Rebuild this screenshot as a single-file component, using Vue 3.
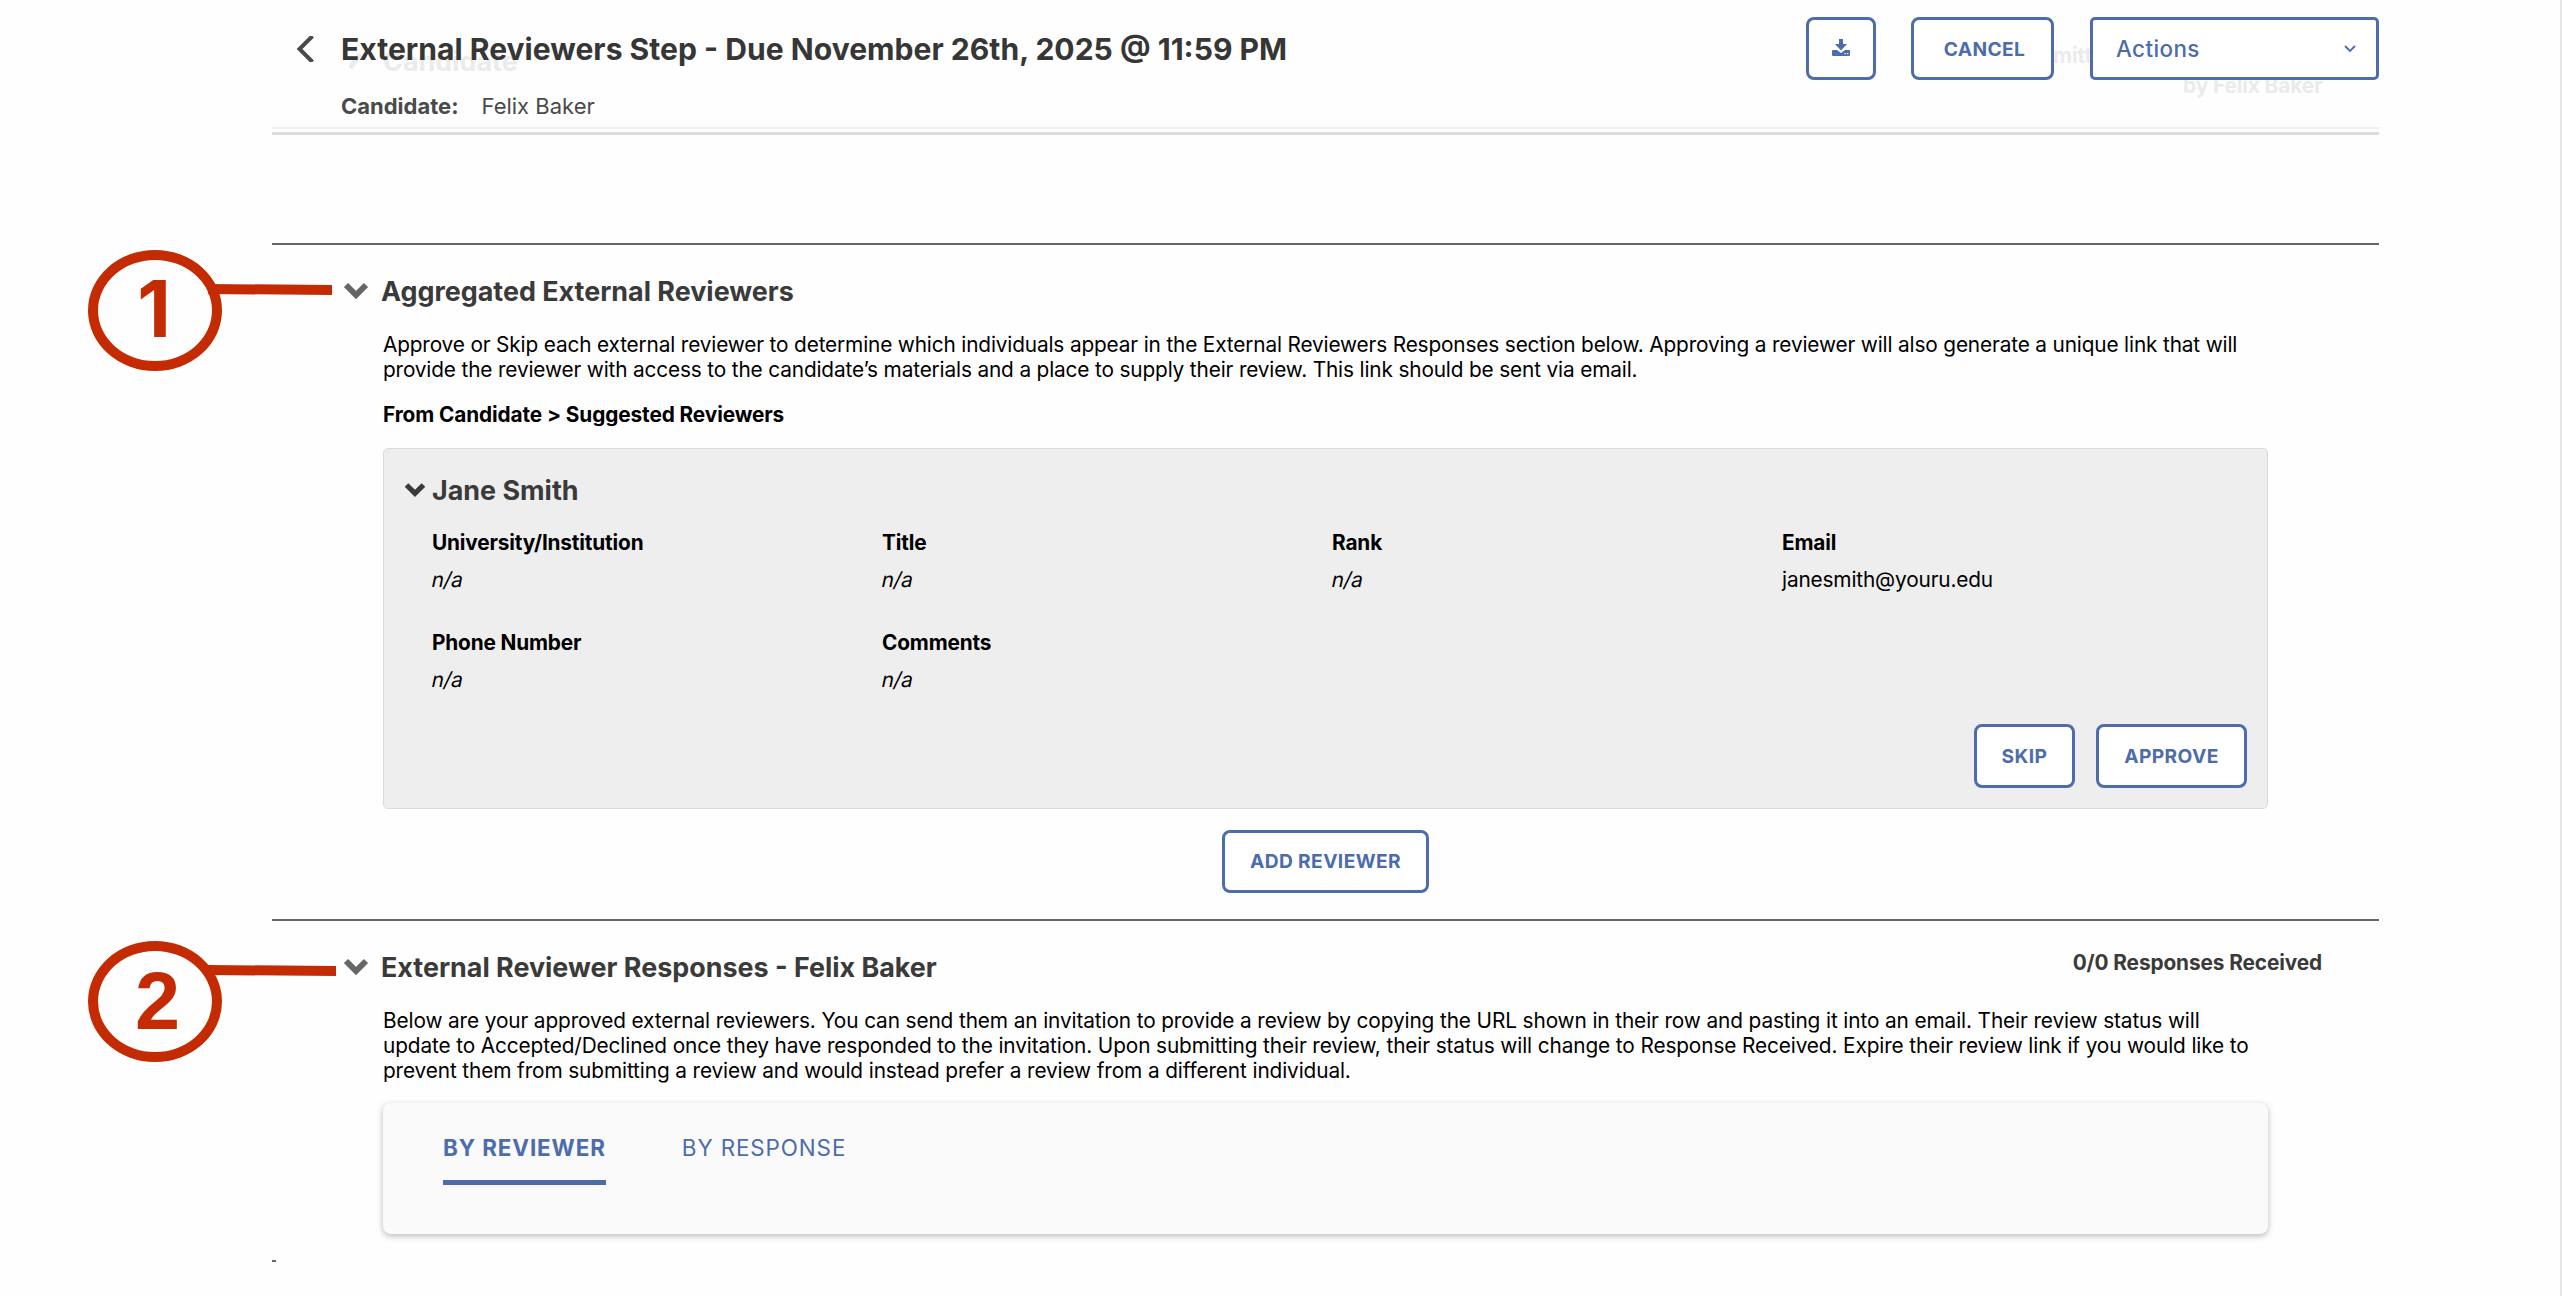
<script setup>
import { ref } from 'vue'

const candidato = ref('Felix Baker')

const fields = ref([
  { label: 'University/Institution', value: '' },
  { label: 'Title', value: '' },
  { label: 'Rank', value: '' },
  { label: 'Email', value: 'janesmith@youru.edu' },
  { label: 'Phone Number', value: '' },
  { label: 'Comments', value: '' }
])

const open = ref({ aggregated: true, reviewer: true, responses: true })
const tab = ref('reviewer')

function toggle(name) {
  open.value[name] = !open.value[name]
}
</script>

<template>
  <div class="page">
    <header class="header">
      <div class="ghost ghost-title">
        <svg width="14" height="20" viewBox="0 0 14 20"><path d="M1 17 L11 3" stroke="#ebebeb" stroke-width="5" /></svg>
        <span>Candidate</span>
      </div>
      <span class="ghost ghost-mitt">mitted</span>
      <span class="ghost ghost-by">by {{ candidato }}</span>

      <div class="heading">
        <svg class="back" width="20" height="26" viewBox="0 0 20 26">
          <path d="M16.500 0 L3.500 13 L16.500 26" fill="none" stroke="#4a4a4a" stroke-width="4" />
        </svg>
        <div>
          <h1>External Reviewers Step - Due November 26th, 2025 @ 11:59 PM</h1>
          <p class="candidate"><b>Candidate:</b><span>{{ candidato }}</span></p>
        </div>
      </div>
      <div class="header-actions">
        <button class="btn download">
          <svg width="18" height="17" viewBox="0 0 18 17">
            <path d="M7 0h4v5h4l-6 6.500l-6-6.500h4z" fill="#4c6cac" />
            <path d="M1 11h4l4 3l4-3h4a1 1 0 0 1 1 1v4a1 1 0 0 1-1 1h-16a1 1 0 0 1-1-1v-4a1 1 0 0 1 1-1z" fill="#4c6cac" />
            <path d="M12.500 14h1.300v1.200h-1.300zM15 14h1.300v1.200h-1.300z" fill="#fff" />
          </svg>
        </button>
        <button class="btn cancel">CANCEL</button>
        <button class="btn select">
          <span>Actions</span>
          <svg width="12" height="8" viewBox="0 0 12 8"><path d="M1 1 L6 6 L11 1" fill="none" stroke="#4c6cac" stroke-width="1.800" /></svg>
        </button>
      </div>
    </header>

    <section class="section first">
      <div class="marker">
        <span class="circle">1</span>
        <svg class="pointer" width="124" height="14" viewBox="0 0 124 14"><path d="M0 1 L124 2 L124 12 L0 11 Z" fill="#c42b03" /></svg>
      </div>
      <div class="section-head">
        <svg class="chevron" width="26" height="18" viewBox="0 0 26 18" @click="toggle('aggregated')">
          <path d="M3 3 L13 13 L23 3" fill="none" stroke="#666" stroke-width="6" />
        </svg>
        <h2>Aggregated External Reviewers</h2>
      </div>
      <div v-if="open.aggregated" class="section-body">
        <p class="text">Approve or Skip each external reviewer to determine which individuals appear in the External Reviewers Responses section below. Approving a reviewer will also generate a unique link that will<br>provide the reviewer with access to the candidate’s materials and a place to supply their review. This link should be sent via email.</p>
        <p class="from">From Candidate &gt; Suggested Reviewers</p>
        <div class="reviewer">
          <div class="reviewer-name">
            <svg width="22" height="16" viewBox="0 0 26 18" @click="toggle('reviewer')">
              <path d="M3 3 L13 13 L23 3" fill="none" stroke="#3a3a3a" stroke-width="6" />
            </svg>
            <h2>Jane Smith</h2>
          </div>
          <div v-if="open.reviewer" class="fields">
            <div v-for="item in fields" :key="item.label" class="field">
              <p class="label">{{ item.label }}</p>
              <p v-if="item.value">{{ item.value }}</p>
              <p v-else class="empty">n/a</p>
            </div>
          </div>
          <div class="reviewer-actions">
            <button class="btn skip">SKIP</button>
            <button class="btn approve">APPROVE</button>
          </div>
        </div>
        <div class="add">
          <button class="btn add-btn">ADD REVIEWER</button>
        </div>
      </div>
    </section>

    <section class="section second">
      <div class="marker">
        <span class="circle">2</span>
        <svg class="pointer" width="128" height="14" viewBox="0 0 128 14"><path d="M0 1 L128 2 L128 12 L0 11 Z" fill="#c42b03" /></svg>
      </div>
      <div class="section-head">
        <svg class="chevron" width="26" height="18" viewBox="0 0 26 18" @click="toggle('responses')">
          <path d="M3 3 L13 13 L23 3" fill="none" stroke="#666" stroke-width="6" />
        </svg>
        <h2>External Reviewer Responses - {{ candidato }}</h2>
        <span class="received">0/0 Responses Received</span>
      </div>
      <div v-if="open.responses" class="section-body">
        <p class="text">Below are your approved external reviewers. You can send them an invitation to provide a review by copying the URL shown in their row and pasting it into an email. Their review status will<br>update to Accepted/Declined once they have responded to the invitation. Upon submitting their review, their status will change to Response Received. Expire their review link if you would like to<br>prevent them from submitting a review and would instead prefer a review from a different individual.</p>
        <div class="tabs">
          <button class="tab" :class="{ active: tab === 'reviewer' }" @click="tab = 'reviewer'">BY REVIEWER</button>
          <button class="tab" :class="{ active: tab === 'response' }" @click="tab = 'response'">BY RESPONSE</button>
        </div>
      </div>
    </section>
    <div class="stub"></div>
  </div>
</template>

<style>
body {
  background: #fefefe;
}
</style>

<style scoped>
.page {
  box-sizing: border-box;
  width: 2562px;
  height: 1296px;
  overflow: hidden;
  padding: 0 181px 0 272px;
  border-right: 2px solid #e6e6e6;
  font-family: Inter, "Liberation Sans", sans-serif;
  font-size: 20.8px;
  font-optical-sizing: none;
  color: #000;
}

h1,
h2,
p {
  margin: 0;
}

h1 {
  font-size: 30.1px;
  line-height: 36px;
  font-weight: 700;
  color: #363636;
  white-space: nowrap;
}

h2 {
  font-size: 26.9px;
  line-height: 32px;
  font-weight: 700;
  color: #3a3a3a;
}

.header {
  position: relative;
  box-sizing: border-box;
  height: 135px;
  border-bottom: 3px solid #dcdcdc;
  display: flex;
  justify-content: space-between;
  align-items: flex-start;
}

/* second hairline just over the header border */
.header::after {
  content: "";
  position: absolute;
  left: 0;
  right: 0;
  bottom: 3px;
  height: 2px;
  background: #f0f0f0;
}

.heading {
  position: relative;
  display: flex;
  padding: 31px 0 0 24px;
}

.back {
  margin: 5px 25px 0 0;
}

.candidate {
  display: flex;
  gap: 23px;
  margin-top: 25px;
  font-size: 22px;
  line-height: 28px;
  color: #4a4a4a;
}

.header-actions {
  position: relative;
  display: flex;
  padding-top: 17px;
}

.ghost {
  position: absolute;
  font-weight: 700;
  color: #ebebeb;
  white-space: nowrap;
}

.ghost-title {
  left: 77px;
  top: 45px;
  display: flex;
  align-items: center;
  gap: 20px;
  font-size: 26.9px;
  line-height: 32px;
}

.ghost-mitt {
  left: 1781px;
  top: 42px;
  line-height: 28px;
}

.ghost-by {
  left: 1911px;
  top: 72px;
  line-height: 28px;
  letter-spacing: -0.1px;
}

.btn {
  box-sizing: border-box;
  height: 63px;
  padding: 0;
  border: 3px solid #4c6cac;
  border-radius: 8px;
  background: #fff;
  color: #4c6cac;
  font-family: inherit;
  font-size: 19.2px;
  font-weight: 700;
  letter-spacing: 0.4px;
}

.download {
  width: 70px;
  margin-right: 35px;
}

.cancel {
  width: 143px;
  margin-right: 36px;
  padding-left: 4px;
}

.select {
  width: 289px;
  border-radius: 5px;
  padding: 0 20px 0 23px;
  display: flex;
  align-items: center;
  justify-content: space-between;
  font-size: 22.4px;
  font-weight: 500;
}

.section {
  position: relative;
  border-top: 2px solid #666;
}

.first {
  margin-top: 108px;
}

.marker {
  position: absolute;
  left: -184px;
}

.first .marker {
  top: 5px;
}

.second .marker {
  top: 20px;
}

.circle {
  box-sizing: border-box;
  display: block;
  width: 134px;
  height: 121px;
  padding-right: 2px;
  border: 10px solid #c42b03;
  border-radius: 50%;
  text-align: center;
  font-size: 78px;
  line-height: 98px;
  font-weight: 700;
  color: #c42b03;
}

.second .circle {
  padding: 0 0 0 5px;
  font-family: "Liberation Sans", sans-serif;
  font-size: 81px;
  line-height: 101px;
}

.pointer {
  position: absolute;
  left: 120px;
}

.first .pointer {
  top: 33px;
}

.second .pointer {
  top: 23px;
}

.section-head {
  display: flex;
  align-items: center;
  padding: 30px 57px 0 71px;
}

.chevron {
  margin-right: 12px;
}

.received {
  margin: -9px 0 0 auto;
  font-weight: 700;
  letter-spacing: -0.1px;
  color: #3a3a3a;
}

.section-body {
  padding: 0 111px;
}

.text {
  margin-top: 25px;
  line-height: 25px;
  letter-spacing: -0.15px;
  white-space: nowrap;
}

.second .text {
  letter-spacing: -0.115px;
}

.from {
  margin-top: 20px;
  line-height: 25px;
  font-weight: 700;
  letter-spacing: -0.1px;
}

.reviewer {
  box-sizing: border-box;
  height: 361px;
  margin-top: 21px;
  padding: 25px 20px 20px;
  border: 1px solid #dadada;
  border-radius: 5px;
  background: #eee;
}

.reviewer-name {
  display: flex;
  align-items: center;
  gap: 6px;
}

.fields {
  display: grid;
  grid-template-columns: repeat(4, 450px);
  row-gap: 38px;
  padding: 24px 0 0 28px;
}

.field p {
  line-height: 25px;
  letter-spacing: -0.15px;
}

.field .label {
  margin-bottom: 12px;
  font-weight: 700;
}

.field .empty {
  transform: skewX(-12deg);
}

.reviewer-actions {
  display: flex;
  justify-content: flex-end;
  gap: 21px;
  padding-top: 32px;
}

.skip {
  width: 101px;
  height: 64px;
}

.approve {
  width: 151px;
  height: 64px;
}

.add {
  display: flex;
  justify-content: center;
  padding: 21px 0 26px;
}

.add-btn {
  width: 207px;
  padding-bottom: 1px;
}

.tabs {
  box-sizing: border-box;
  height: 131px;
  margin-top: 20px;
  padding: 29px 60px 0;
  display: flex;
  align-items: flex-start;
  gap: 76px;
  border-radius: 8px;
  background: #fafafa;
  box-shadow: 0 2px 6px rgba(0, 0, 0, 0.28);
}

.tab {
  height: 53px;
  padding: 0 0 18px;
  border: none;
  border-bottom: 5px solid transparent;
  background: none;
  color: #4c6cac;
  font-family: inherit;
  font-size: 22.4px;
  letter-spacing: 0.9px;
  white-space: nowrap;
}

.active {
  font-weight: 700;
  border-bottom-color: #4c6cac;
}

.stub {
  width: 4px;
  height: 2px;
  margin-top: 26px;
  background: #666;
}
</style>
